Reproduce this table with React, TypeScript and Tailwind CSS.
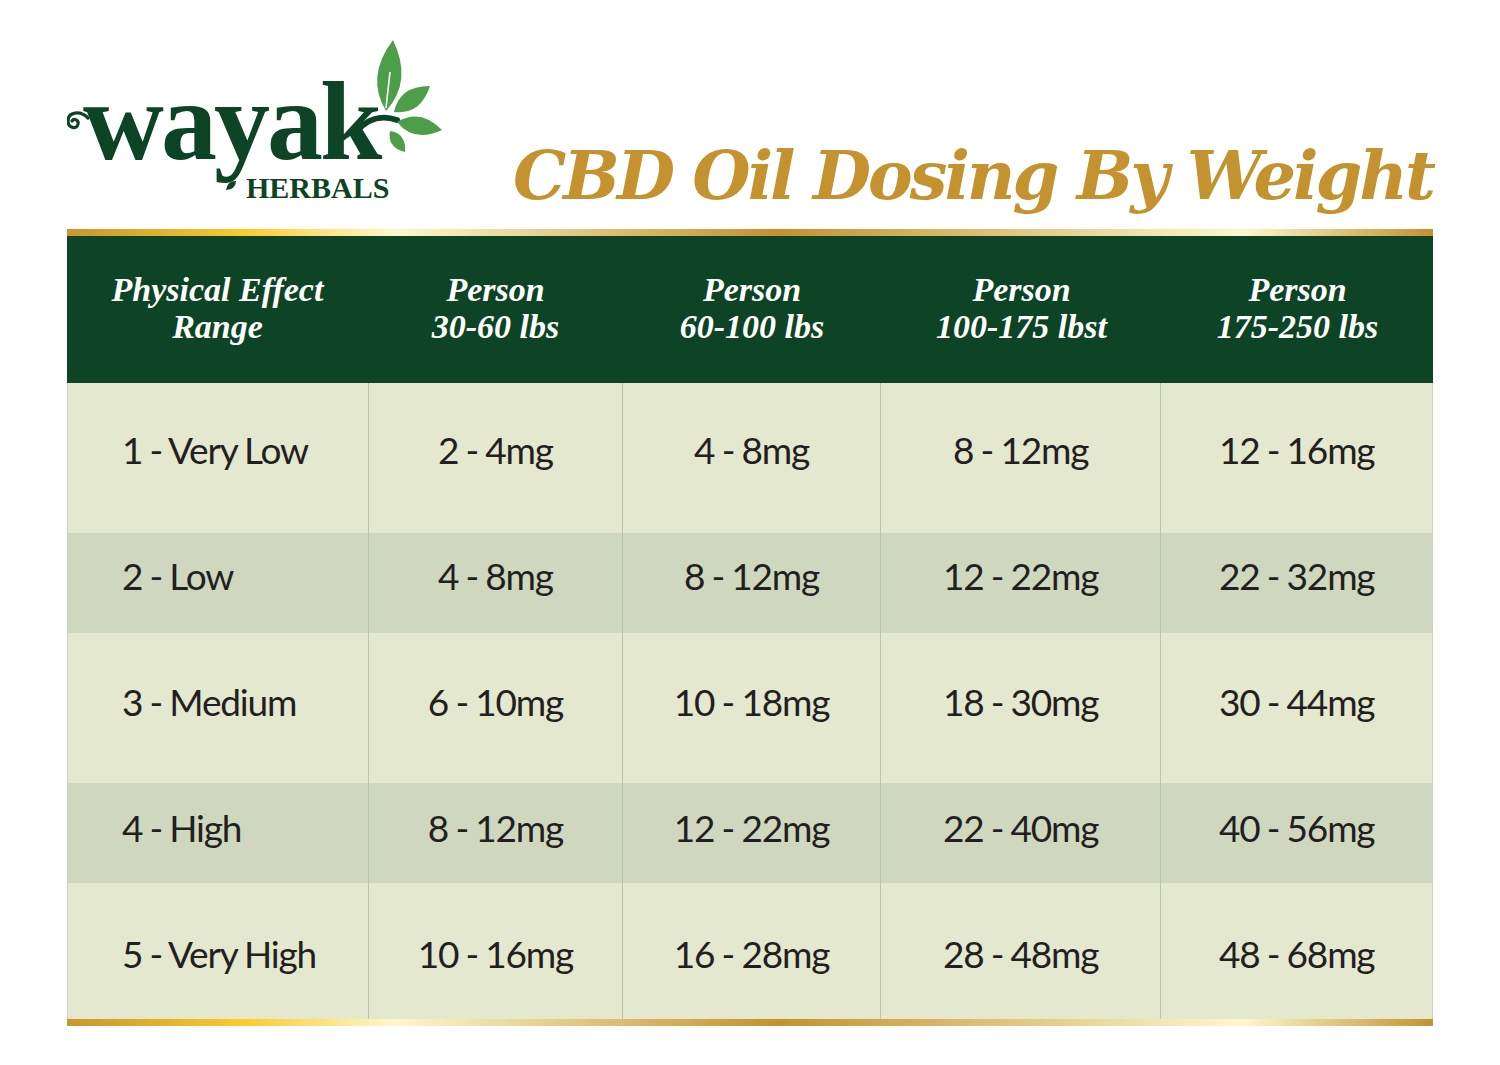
import React from "react";

const cols = ["w-[301px]", "w-[255px]", "w-[258px]", "w-[281px]", "w-[271px]"];

const headers = [
  ["Physical Effect", "Range"],
  ["Person", "30-60 lbs"],
  ["Person", "60-100 lbs"],
  ["Person", "100-175 lbst"],
  ["Person", "175-250 lbs"],
];

const rows = [
  { h: "h-[150px] pb-[18px]", bg: "bg-[#e3e8cf]", cells: ["1 - Very Low", "2 - 4mg", "4 - 8mg", "8 - 12mg", "12 - 16mg"] },
  { h: "h-[100px] pb-[16px]", bg: "bg-[#cfd8bf]", cells: ["2 - Low", "4 - 8mg", "8 - 12mg", "12 - 22mg", "22 - 32mg"] },
  { h: "h-[150px] pb-[14px]", bg: "bg-[#e3e8cf]", cells: ["3 - Medium", "6 - 10mg", "10 - 18mg", "18 - 30mg", "30 - 44mg"] },
  { h: "h-[100px] pb-[12px]", bg: "bg-[#cfd8bf]", cells: ["4 - High", "8 - 12mg", "12 - 22mg", "22 - 40mg", "40 - 56mg"] },
  { h: "h-[136px] pt-[4px]", bg: "bg-[#e3e8cf]", cells: ["5 - Very High", "10 - 16mg", "16 - 28mg", "28 - 48mg", "48 - 68mg"] },
];

// leaf shape from base to tip, w = half width
function leaf(bx: number, by: number, tx: number, ty: number, w: number) {
  const dx = tx - bx;
  const dy = ty - by;
  const len = Math.sqrt(dx * dx + dy * dy);
  const nx = (-dy / len) * w;
  const ny = (dx / len) * w;
  const mx = bx + dx * 0.45;
  const my = by + dy * 0.45;
  return `M${bx},${by} Q${mx + nx * 2},${my + ny * 2} ${tx},${ty} Q${mx - nx * 2},${my - ny * 2} ${bx},${by}Z`;
}

function GoldBar() {
  return (
    <div className="h-[7px] w-full bg-[linear-gradient(90deg,#c8962e_0%,#fdca2e_13%,#fdf8cc_24%,#c4922f_52%,#fdf8cc_86%,#c4922f_100%)]" />
  );
}

function Logo() {
  return (
    <div className="relative mt-[30px] w-[380px] h-[190px] pt-[47px]">
      <svg className="absolute left-0 top-0" width="380" height="190" viewBox="67 30 380 190">
        {/* swirl */}
        <path
          d="M88,118 C80,110 68,112 68,121 C68,128 77,130 78,124 C79,120 74,118 72,121"
          fill="none"
          stroke="#0d4425"
          strokeWidth="3.2"
          strokeLinecap="round"
        />
        {/* stem from k */}
        <path d="M356,132 C366,120 380,114 397,120" fill="none" stroke="#0d4425" strokeWidth="6" strokeLinecap="round" />
        <path d={leaf(386, 111, 393, 40, 12)} fill="#4c9f48" />
        <path d="M386,108 L390,72" stroke="#ffffff" strokeWidth="1.6" />
        <path d={leaf(394, 112, 430, 86, 9)} fill="#4c9f48" />
        <path d={leaf(397, 122, 442, 130, 9)} fill="#4c9f48" />
        <path d={leaf(390, 131, 405, 152, 6)} fill="#4c9f48" />
        {/* y tail leaf */}
        <path d={leaf(236, 181, 226, 190, 3)} fill="#0d4425" />
      </svg>
      <div className="relative pl-[16px] text-[112px] leading-[0.8] font-bold tracking-[-3px] text-[#0d4425] font-['Liberation_Serif',serif]">
        wayak
      </div>
      <div className="relative mt-[6px] pl-[179px] text-[30px] leading-[1] font-bold text-[#0d4425] font-['Liberation_Serif',serif]">
        HERBALS
      </div>
    </div>
  );
}

export default function App() {
  return (
    <div className="w-[1500px] h-[1065px] bg-white">
      <div className="flex justify-between h-[229px] pl-[67px] pr-[67px]">
        <Logo />
        <div className="self-end pb-[20px] whitespace-nowrap text-[67px] leading-[1] font-bold italic tracking-[-3px] text-[#c4922f] font-['DejaVu_Serif',serif]">
          CBD Oil Dosing By Weight
        </div>
      </div>

      <div className="ml-[67px] w-[1366px]">
        <GoldBar />
        <div className="flex h-[147px] bg-[#0d4425]">
          {headers.map((h, i) => (
            <div
              key={i}
              className={`${cols[i]} flex flex-col items-center justify-center pb-[4px] text-white text-[34px] leading-[37px] font-bold italic font-['Liberation_Serif',serif]`}
            >
              <span>{h[0]}</span>
              <span>{h[1]}</span>
            </div>
          ))}
        </div>
        <div className="border-x border-[#c9d3b8]">
          {rows.map((r, ri) => (
            <div key={ri} className={`flex ${r.bg}`}>
              {r.cells.map((c, ci) => (
                <div
                  key={ci}
                  className={`${cols[ci]} ${r.h} flex items-center ${
                    ci === 0 ? "justify-start pl-[54px]" : "justify-center"
                  } ${ci < 4 ? "border-r border-[#b7c6a8]" : ""} text-[37px] leading-[1] tracking-[-1.2px] [word-spacing:-1px] text-[#231f20] font-['Lato',sans-serif]`}
                >
                  {c}
                </div>
              ))}
            </div>
          ))}
        </div>
        <GoldBar />
      </div>
    </div>
  );
}
